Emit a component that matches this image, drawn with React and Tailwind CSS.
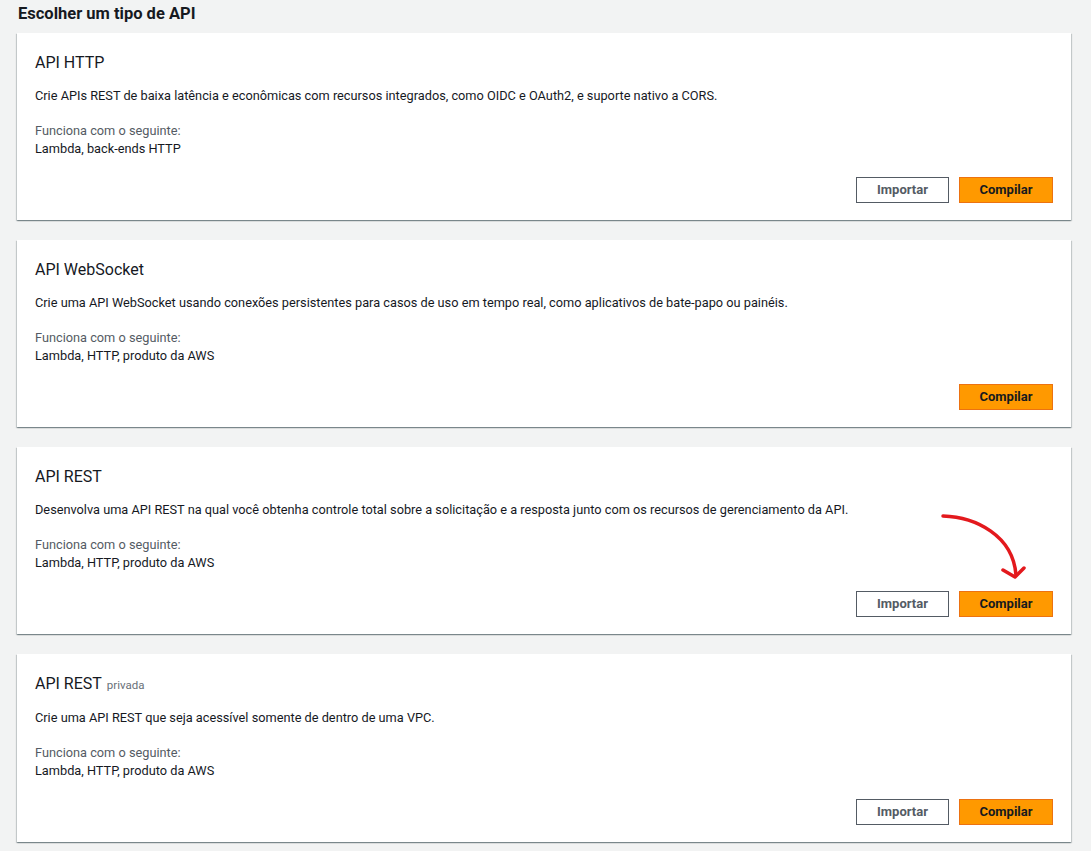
import React from "react";

const cards = [
  {
    title: "API HTTP",
    desc: "Crie APIs REST de baixa latência e econômicas com recursos integrados, como OIDC e OAuth2, e suporte nativo a CORS.",
    works: "Lambda, back-ends HTTP",
    importar: true,
  },
  {
    title: "API WebSocket",
    desc: "Crie uma API WebSocket usando conexões persistentes para casos de uso em tempo real, como aplicativos de bate-papo ou painéis.",
    works: "Lambda, HTTP, produto da AWS",
    importar: false,
  },
  {
    title: "API REST",
    desc: "Desenvolva uma API REST na qual você obtenha controle total sobre a solicitação e a resposta junto com os recursos de gerenciamento da API.",
    works: "Lambda, HTTP, produto da AWS",
    importar: true,
    arrow: true,
  },
  {
    title: "API REST",
    tag: "privada",
    desc: "Crie uma API REST que seja acessível somente de dentro de uma VPC.",
    works: "Lambda, HTTP, produto da AWS",
    importar: true,
  },
];

function Card({ c }) {
  return (
    <div className="relative bg-white shadow-[0_1px_1px_0_rgba(0,28,36,0.3),1px_1px_1px_0_rgba(0,28,36,0.15),-1px_1px_1px_0_rgba(0,28,36,0.15)] pt-[19px] pb-[17px] pl-[18px] pr-[18px]">
      <div className="text-[16px] leading-[22px] text-[#16191f]">
        {c.title}
        {c.tag && <span className="ml-[5px] text-[11.5px] text-[#687078]">{c.tag}</span>}
      </div>
      <div className="mt-[13px] text-[12.75px] leading-[18px] text-[#16191f]">{c.desc}</div>
      <div className="mt-[17px] text-[12.75px] leading-[18px] text-[#545b64]">Funciona com o seguinte:</div>
      <div className="text-[12.75px] leading-[18px] text-[#16191f]">{c.works}</div>
      <div className="mt-[19px] flex justify-end gap-[10px]">
        {c.importar && (
          <button className="h-[26px] w-[93px] border border-[#545b64] bg-white text-[13px] font-bold text-[#545b64]">
            Importar
          </button>
        )}
        <button className="h-[26px] w-[94px] border border-[#ec7211] bg-[#ff9900] text-[13px] font-bold text-[#16191f]">
          Compilar
        </button>
      </div>
      {c.arrow && (
        <svg
          className="absolute left-0 top-0 pointer-events-none"
          width="1054"
          height="188"
          viewBox="0 0 1054 188"
        >
          <g transform="translate(-17,-447)" fill="none" stroke="#e3191d" strokeWidth="3.5" strokeLinecap="round" strokeLinejoin="round">
            <path d="M943 516 C 975 517, 1013 535, 1016 575" />
            <path d="M1003 570 L1015 577 L1024 568" />
          </g>
        </svg>
      )}
    </div>
  );
}

export default function App() {
  return (
    <div className="min-h-[851px] bg-[#f2f3f3] pl-[17px] pr-[20px] font-['Roboto',sans-serif]">
      <h2 className="pl-[1px] text-[16.5px] font-bold leading-[28px] text-[#16191f]">Escolher um tipo de API</h2>
      <div className="mt-[5px] flex flex-col gap-[20px]">
        {cards.map((c, i) => (
          <Card key={i} c={c} />
        ))}
      </div>
    </div>
  );
}
